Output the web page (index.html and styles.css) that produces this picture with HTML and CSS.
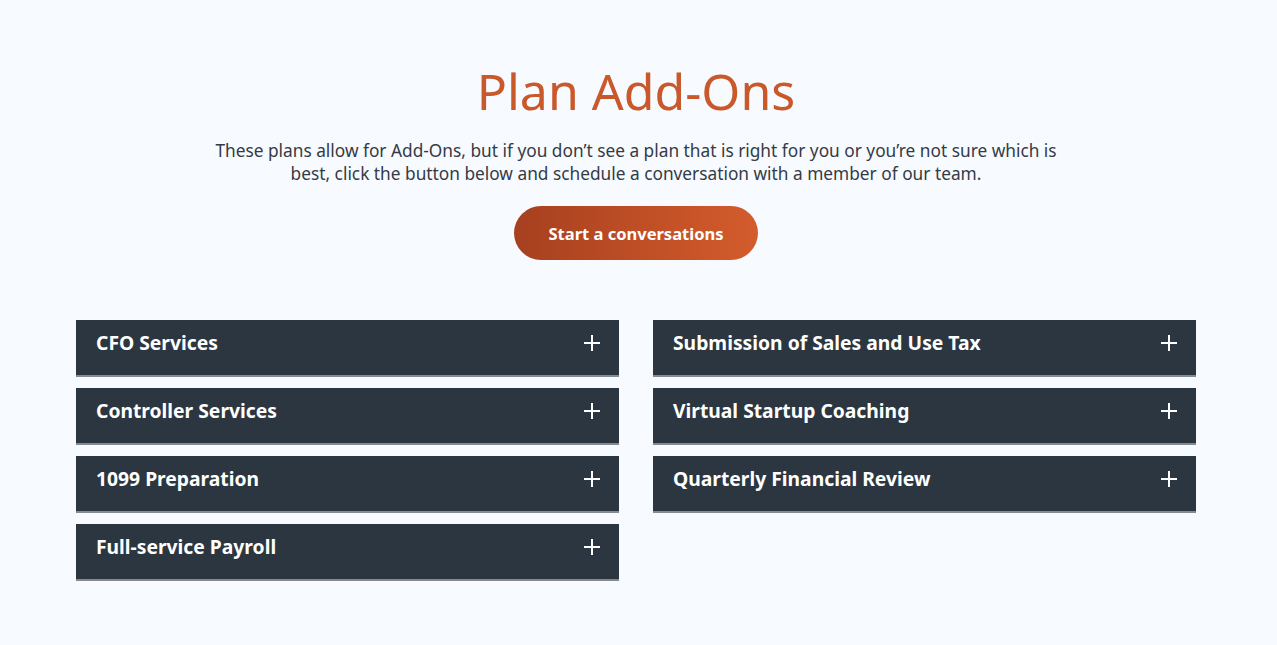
FILE: index.html
```html
<!DOCTYPE html>
<html lang="en">
<head>
<meta charset="utf-8">
<title>Plan Add-Ons</title>
<link rel="stylesheet" href="styles.css">
</head>
<body>
<main class="page">
  <section class="intro">
    <h1 class="title">Plan Add-Ons</h1>
    <p class="lead">These plans allow for Add-Ons, but if you don’t see a plan that is right for you or you’re not sure which is best, click the button below and schedule a conversation with a member of our team.</p>
    <a class="cta" href="#">Start a conversations</a>
  </section>
  <section class="addons">
    <div class="col">
      <div class="item"><span>CFO Services</span><svg class="plus" viewBox="0 0 16 16"><path d="M8 0v16M0 8h16"/></svg></div>
      <div class="item"><span>Controller Services</span><svg class="plus" viewBox="0 0 16 16"><path d="M8 0v16M0 8h16"/></svg></div>
      <div class="item"><span>1099 Preparation</span><svg class="plus" viewBox="0 0 16 16"><path d="M8 0v16M0 8h16"/></svg></div>
      <div class="item"><span>Full-service Payroll</span><svg class="plus" viewBox="0 0 16 16"><path d="M8 0v16M0 8h16"/></svg></div>
    </div>
    <div class="col">
      <div class="item"><span>Submission of Sales and Use Tax</span><svg class="plus" viewBox="0 0 16 16"><path d="M8 0v16M0 8h16"/></svg></div>
      <div class="item"><span>Virtual Startup Coaching</span><svg class="plus" viewBox="0 0 16 16"><path d="M8 0v16M0 8h16"/></svg></div>
      <div class="item"><span>Quarterly Financial Review</span><svg class="plus" viewBox="0 0 16 16"><path d="M8 0v16M0 8h16"/></svg></div>
    </div>
  </section>
</main>
</body>
</html>
```
FILE: styles.css
```css
html, body {
  margin: 0;
  padding: 0;
  background: #f7faff;
}
body {
  font-family: "Noto Sans", "Open Sans", sans-serif;
  color: #333a44;
}
.page {
  width: 1272px;
  padding-top: 59px;
  box-sizing: border-box;
}
.intro {
  display: flex;
  flex-direction: column;
  align-items: center;
}
.title {
  margin: 0;
  font-size: 50px;
  font-weight: 400;
  line-height: 64px;
  color: #c9582b;
}
.lead {
  margin: 16px 0 0;
  width: 870px;
  text-align: center;
  font-size: 17.3px;
  line-height: 23px;
  color: #343b45;
}
.cta {
  margin-top: 21px;
  width: 244px;
  height: 54px;
  border-radius: 27px;
  background: linear-gradient(90deg, #a6401f 0%, #c04f26 55%, #d35c2c 100%);
  color: #fff;
  font-weight: 700;
  font-size: 16.5px;
  text-decoration: none;
  display: flex;
  align-items: center;
  justify-content: center;
}
.addons {
  margin: 60px 0 0 76px;
  width: 1120px;
  display: grid;
  grid-template-columns: 1fr 1fr;
  column-gap: 34px;
  align-items: start;
}
.col {
  display: flex;
  flex-direction: column;
  gap: 11px;
}
.item {
  height: 57px;
  box-sizing: border-box;
  background: #2c3640;
  border-bottom: 2px solid #838a92;
  padding: 0 19px 10px 20px;
  display: flex;
  align-items: center;
  justify-content: space-between;
  color: #fff;
  font-weight: 700;
  font-size: 19.3px;
}
.plus {
  width: 16px;
  height: 16px;
  stroke: #fff;
  stroke-width: 2;
  fill: none;
}
```
